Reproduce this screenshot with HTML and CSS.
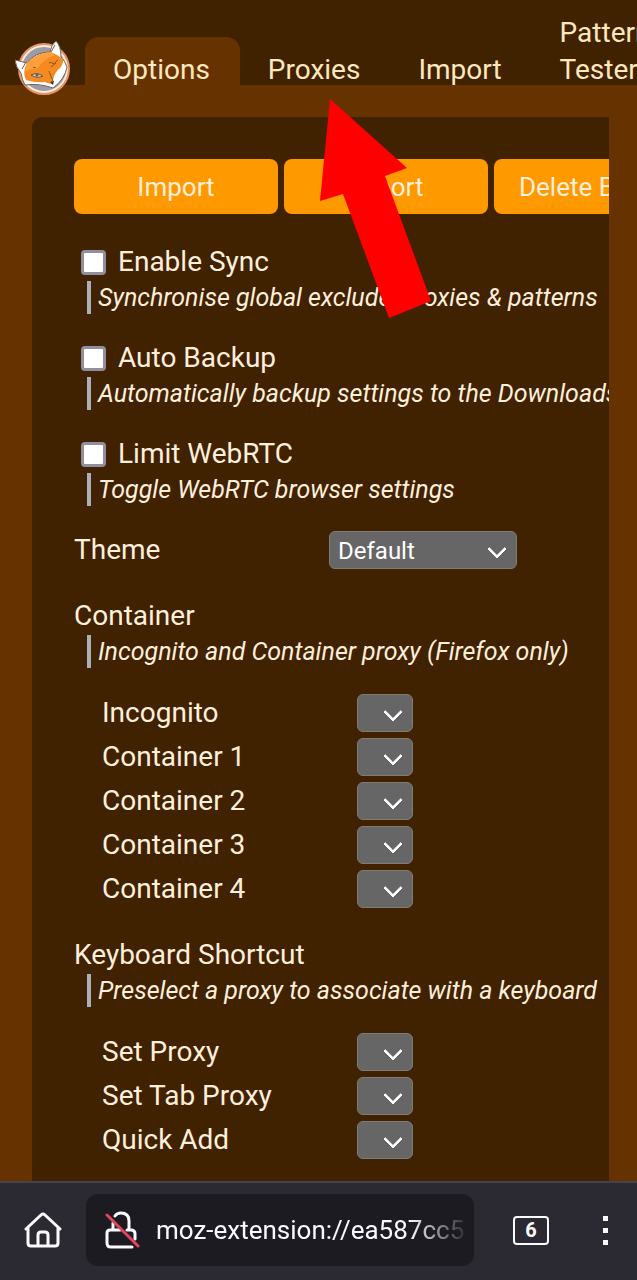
FILE: index.html
```html
<!DOCTYPE html>
<html lang="en">
<head>
    <meta charset="UTF-8">
    <meta name="viewport" content="width=device-width, initial-scale=1.0">
    <title>FoxyProxy Options</title>
    <link rel="stylesheet" href="styles.css">
</head>
<body>
    <header class="header">
        <svg class="logo" viewBox="0 0 56 56" aria-hidden="true">
            <circle cx="29" cy="30" r="25" fill="#9c9ca8" stroke="#e8935f" stroke-width="2"/>
            <circle cx="29" cy="30" r="23" fill="none" stroke="#ffe9d8" stroke-width="2"/>
            <path d="M12 24 L0 21 Q1 29 6 34 Q7 41 10 46 Q24 44 38 49 Q50 40 52 28 Q50 22 46 18 Q46 7 41 2 Q36 6 35 13 Q20 13 12 24Z" fill="#fff" stroke="#6a655c" stroke-width="1"/>
            <path d="M12 24 Q21 14 36 13 Q43 16 48 20 Q49 26 42 32 Q37 38 38 45 Q34 45 30 43 Q20 44 11 41 Q7 33 12 24Z" fill="#f58a20"/>
            <path d="M12 24 Q21 14 36 13 L40 16 Q28 20 22 30 Q15 29 10 33Z" fill="#ffa03c"/>
            <path d="M16 36 Q22 33 28 37 Q22 40 16 36Z" fill="#d9cbbb" stroke="#6b5a48" stroke-width="1"/>
            <circle cx="22" cy="36" r="1.5" fill="#46667a"/>
            <path d="M18 28 l3 1 M34 24 Q37 22 38 25 L43 21 M36 28 L41 24 M34 32 L38 42 M36 13 L40 6 M7 30 L11 23" fill="none" stroke="#8a5527" stroke-width="1"/>
            <path d="M35 43 L39 42 L38 46Z" fill="#333"/>
        </svg>
        <nav class="tabs">
            <a class="tab active" href="#options">Options</a>
            <a class="tab" href="#proxies">Proxies</a>
            <a class="tab" href="#import">Import</a>
            <a class="tab" href="#tester">Pattern Tester</a>
        </nav>
    </header>

    <main class="main">
        <section class="panel" id="options">
            <div class="buttons">
                <button type="button">Import</button>
                <button type="button">Export</button>
                <button type="button">Delete Browsing Data</button>
            </div>

            <div class="check-group">
                <label class="check"><input type="checkbox"> Enable Sync</label>
                <p class="description">Synchronise global exclude, proxies &amp; patterns</p>
            </div>
            <div class="check-group">
                <label class="check"><input type="checkbox"> Auto Backup</label>
                <p class="description">Automatically backup settings to the Downloads</p>
            </div>
            <div class="check-group">
                <label class="check"><input type="checkbox"> Limit WebRTC</label>
                <p class="description">Toggle WebRTC browser settings</p>
            </div>

            <div class="row">
                <label for="theme">Theme</label>
                <span class="select wide">
                    <select id="theme"><option>Default</option></select>
                </span>
            </div>

            <div class="group">
                <h2>Container</h2>
                <p class="description">Incognito and Container proxy (Firefox only)</p>
                <div class="rows">
                    <div class="row">
                        <label for="incognito">Incognito</label>
                        <span class="select"><select id="incognito"><option></option></select></span>
                    </div>
                    <div class="row">
                        <label for="container1">Container 1</label>
                        <span class="select"><select id="container1"><option></option></select></span>
                    </div>
                    <div class="row">
                        <label for="container2">Container 2</label>
                        <span class="select"><select id="container2"><option></option></select></span>
                    </div>
                    <div class="row">
                        <label for="container3">Container 3</label>
                        <span class="select"><select id="container3"><option></option></select></span>
                    </div>
                    <div class="row">
                        <label for="container4">Container 4</label>
                        <span class="select"><select id="container4"><option></option></select></span>
                    </div>
                </div>
            </div>

            <div class="group">
                <h2>Keyboard Shortcut</h2>
                <p class="description">Preselect a proxy to associate with a keyboard</p>
                <div class="rows">
                    <div class="row">
                        <label for="setProxy">Set Proxy</label>
                        <span class="select"><select id="setProxy"><option></option></select></span>
                    </div>
                    <div class="row">
                        <label for="setTabProxy">Set Tab Proxy</label>
                        <span class="select"><select id="setTabProxy"><option></option></select></span>
                    </div>
                    <div class="row">
                        <label for="quickAdd">Quick Add</label>
                        <span class="select"><select id="quickAdd"><option></option></select></span>
                    </div>
                </div>
            </div>
        </section>
    </main>

    <footer class="browser-bar">
        <button class="home" type="button" aria-label="Home">
            <svg width="38" height="36" viewBox="0 0 38 36" fill="none" stroke="#fbfbfe" stroke-width="3" stroke-linecap="round" stroke-linejoin="round">
                <path d="M2 17 L17 3 Q19 1 21 3 L36 17 M4 16 V31 Q4 34 7 34 H31 Q34 34 34 31 V16"/>
                <path d="M14 33 V23 Q14 20 17 20 H21 Q24 20 24 23 V33"/>
            </svg>
        </button>
        <div class="address">
            <svg width="36" height="38" viewBox="0 0 36 38" fill="none" stroke-width="3" stroke-linecap="round">
                <path stroke="#fbfbfe" d="M10 5 Q12 2 16 2 Q24 2 24 10 V18 M8 12 V19 M15 19 H5 Q2 19 2 22 V32 Q2 36 6 36 H27 M22 19 H26 Q30 19 30 23 V28"/>
                <path stroke="#e2445c" d="M2 4 L33 35"/>
            </svg>
            <input type="text" value="moz-extension://ea587cc5" aria-label="Address">
        </div>
        <button class="tab-count" type="button" aria-label="Open tabs">6</button>
        <button class="menu" type="button" aria-label="Menu"><i></i><i></i><i></i></button>
    </footer>

    <svg class="arrow" width="111" height="219" viewBox="0 0 111 219" aria-hidden="true">
        <path d="M10 0 L87 69 L65 77 L111 202 L69 219 L23 95 L0 102Z" fill="#f00"/>
    </svg>
</body>
</html>
```
FILE: styles.css
```css
* {
    box-sizing: border-box;
}
body {
    display: flex;
    flex-direction: column;
    position: relative;
    height: 100vh;
    margin: 0;
    overflow: hidden;
    background: #630;
    color: #ffefdc;
    font-family: Roboto, sans-serif;
    font-size: 28px;
    line-height: 38px;
}
button, input, select {
    margin: 0;
    font: inherit;
    color: inherit;
}

/* header */
.header {
    display: flex;
    flex: none;
    align-items: flex-end;
    height: 85px;
    padding-left: 15px;
    background: #402100;
}
.logo {
    flex: none;
    width: 56px;
    height: 56px;
    margin: 0 14px -10px 0;
}
.tabs {
    display: flex;
    align-items: flex-end;
    margin-bottom: -3px;
}
.tab {
    padding: 14px 30px 0 28px;
    border-radius: 14px 14px 0 0;
    color: #ffe8bf;
    line-height: 37px;
    text-decoration: none;
}
.tab.active {
    background: #630;
}

/* options panel */
.main {
    flex: 1;
    min-height: 0;
    padding: 32px 28px 0 32px;
}
.panel {
    height: 100%;
    padding: 42px 0 0 42px;
    border-radius: 10px 0 0 0;
    background: #402100;
    overflow: hidden;
    white-space: nowrap;
}
.buttons {
    display: flex;
    gap: 6px;
    margin-bottom: 29px;
}
.buttons button {
    flex: none;
    min-width: 204px;
    height: 55px;
    padding: 0 25px;
    border: 0;
    border-radius: 8px;
    background: #f90;
    font-size: 26px;
}
.check-group {
    margin-bottom: 25px;
}
.check {
    display: flex;
    align-items: center;
    gap: 12px;
    padding-left: 7px;
}
.check input {
    appearance: none;
    width: 25px;
    height: 25px;
    border: 3px solid #8f8f9d;
    border-radius: 4px;
    background: #fff;
}
.description {
    margin: 0 0 0 13px;
    padding-left: 7px;
    border-left: 4px solid #a9b0b8;
    font-size: 25px;
    font-style: italic;
    line-height: 33px;
}
.group {
    margin-top: 28px;
}
.group h2 {
    margin: 0;
    font-size: 28px;
    font-weight: 400;
}
.rows {
    display: grid;
    gap: 6px;
    margin: 26px 0 0 28px;
}
.row {
    display: grid;
    grid-template-columns: 255px 1fr;
}
.select {
    position: relative;
    width: 56px;
    height: 38px;
}
.select.wide {
    width: 188px;
}
.select::after {
    content: "";
    position: absolute;
    top: 11px;
    right: 13px;
    width: 11px;
    height: 11px;
    border: solid #fff;
    border-width: 0 3px 3px 0;
    border-radius: 1px;
    transform: rotate(45deg);
    pointer-events: none;
}
.select select {
    display: block;
    appearance: none;
    width: 100%;
    height: 100%;
    padding: 0 8px;
    border: 1px solid #817b76;
    border-radius: 6px;
    background: #666;
    color: #fff;
    font-size: 24px;
}

/* browser toolbar */
.browser-bar {
    display: flex;
    flex: none;
    align-items: center;
    height: 99px;
    padding: 0 28px 3px 24px;
    border-top: 2px solid #45424a;
    background: #2b2a33;
    color: #fbfbfe;
}
.browser-bar button {
    flex: none;
    padding: 0;
    border: 0;
    background: none;
}
.browser-bar svg {
    display: block;
    flex: none;
}
.address {
    display: flex;
    flex: 1;
    align-items: center;
    gap: 15px;
    min-width: 0;
    height: 72px;
    margin: 0 39px 0 24px;
    padding: 0 4px 0 19px;
    border-radius: 12px;
    background: #1c1b22;
}
.address input {
    flex: 1;
    min-width: 0;
    padding: 0;
    border: 0;
    background: none;
    font-size: 26px;
    -webkit-mask-image: linear-gradient(to left, transparent, #000 60px);
    mask-image: linear-gradient(to left, transparent, #000 60px);
}
.browser-bar .tab-count {
    width: 36px;
    height: 29px;
    border: 2px solid #fbfbfe;
    border-radius: 4px;
    font-size: 20px;
    font-weight: 700;
    line-height: 24px;
}
.browser-bar .menu {
    display: grid;
    gap: 7px;
    width: 8px;
    margin-left: 52px;
    justify-items: center;
}
.menu i {
    width: 5px;
    height: 5px;
    background: #fbfbfe;
}

/* pointer to the Proxies tab */
.arrow {
    position: absolute;
    top: 99px;
    left: 320px;
    pointer-events: none;
}
```
